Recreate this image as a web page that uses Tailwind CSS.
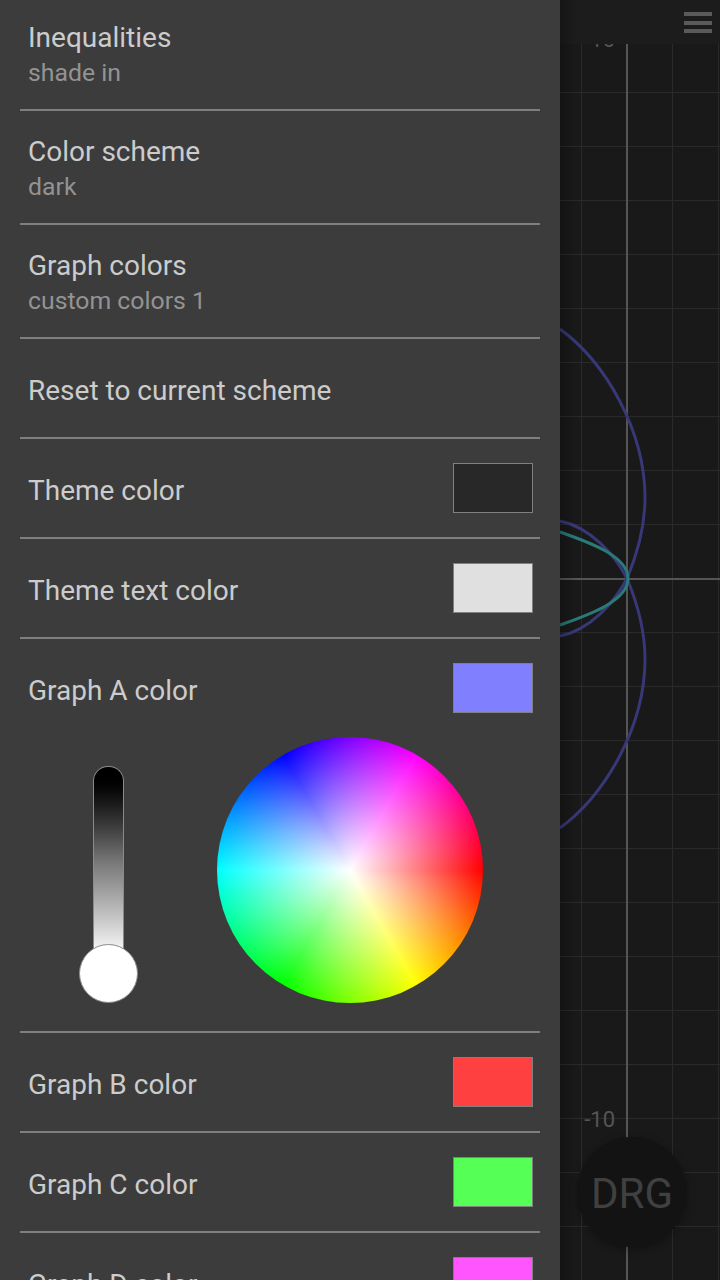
<!DOCTYPE html>
<html lang="en">
<head>
    <meta charset="UTF-8">
    <title>Settings</title>
    <script src="https://cdn.jsdelivr.net/npm/@tailwindcss/browser@4"></script>
</head>
<body class="bg-[#191919]">
    <div class="relative w-[720px] h-[1280px] overflow-hidden font-['Roboto',sans-serif] bg-[#191919]">

        <!-- graph behind the drawer -->
        <svg class="absolute left-0 top-0" width="720" height="1280" viewBox="0 0 720 1280" fill="none">
            <g stroke="#2a2a2a" stroke-width="1">
                <path d="M581.5 44V1280M672.5 44V1280M718.5 44V1280"/>
                <path d="M560 92.5H720M560 146.5H720M560 200.5H720M560 254.5H720M560 308.5H720M560 362.5H720M560 416.5H720M560 470.5H720M560 524.5H720"/>
                <path d="M560 632.5H720M560 686.5H720M560 740.5H720M560 794.5H720M560 848.5H720M560 902.5H720M560 956.5H720M560 1010.5H720M560 1064.5H720M560 1118.5H720M560 1172.5H720M560 1226.5H720"/>
            </g>
            <path d="M627 44V1280M560 579H720" stroke="#555555" stroke-width="2"/>
            <g stroke="#383878" stroke-width="3">
                <path d="M560 329C605 362 645 430 645 498C645 530 636 557 627 578.5C636 600 645 627 645 659C645 727 605 795 560 828"/>
                <path d="M560 521C590 527 615 555 627 578.5C615 602 590 630 560 636"/>
            </g>
            <path d="M560 532C585 541 628 555 628 578.5C628 602 585 616 560 625" stroke="#2a7a78" stroke-width="3"/>
        </svg>
        <div class="absolute right-[105px] top-[20px] text-[22px] leading-[40px] text-[#555555]">10</div>
        <div class="absolute right-[105px] top-[1100px] text-[22px] leading-[40px] text-[#555555]">-10</div>

        <!-- top bar -->
        <div class="absolute left-0 top-0 w-[720px] h-[44px] bg-[#1c1c1c]">
            <div class="absolute left-[684px] top-[12px] w-[28px] flex flex-col gap-[4.5px]">
                <div class="h-[4px] bg-[#5a5a5a]"></div>
                <div class="h-[4px] bg-[#5a5a5a]"></div>
                <div class="h-[4px] bg-[#5a5a5a]"></div>
            </div>
        </div>

        <!-- drawer shadow -->
        <div class="absolute left-[560px] top-0 w-[16px] h-[1280px] bg-gradient-to-r from-black/25 to-transparent"></div>

        <!-- DRG button -->
        <div class="absolute left-[577px] top-[1137px] w-[110px] h-[110px] pt-[3px] rounded-full bg-[#131313] shadow-[0_3px_8px_rgba(0,0,0,0.3)] flex items-center justify-center text-[42px] text-[#404040]">DRG</div>

        <!-- settings drawer -->
        <div class="absolute left-0 top-0 w-[560px] h-[1280px] overflow-hidden bg-[#3c3c3c]">
            <div class="mx-[20px] mt-[-3px]">
                <div class="h-[114px] px-[8px] pt-[23px] border-b-2 border-[#7f7f7f]">
                    <div class="text-[28px] leading-[36px] text-[#cccccc]">Inequalities</div>
                    <div class="text-[24.8px] leading-[34px] text-[#939393]">shade in</div>
                </div>
                <div class="h-[114px] px-[8px] pt-[23px] border-b-2 border-[#7f7f7f]">
                    <div class="text-[28px] leading-[36px] text-[#cccccc]">Color scheme</div>
                    <div class="text-[24.8px] leading-[34px] text-[#939393]">dark</div>
                </div>
                <div class="h-[114px] px-[8px] pt-[23px] border-b-2 border-[#7f7f7f]">
                    <div class="text-[28px] leading-[36px] text-[#cccccc]">Graph colors</div>
                    <div class="text-[24.8px] leading-[34px] text-[#939393]">custom colors 1</div>
                </div>
                <div class="h-[100px] pl-[8px] pr-[7px] flex items-center border-b-2 border-[#7f7f7f] text-[28px] text-[#cccccc]">
                    <span class="pt-[6px]">Reset to current scheme</span>
                </div>
                <div class="h-[100px] pl-[8px] pr-[7px] flex items-center justify-between border-b-2 border-[#7f7f7f] text-[28px] text-[#cccccc]">
                    <span class="pt-[6px]">Theme color</span>
                    <div class="w-[80px] h-[50px] border border-[#808080] bg-[#282828]"></div>
                </div>
                <div class="h-[100px] pl-[8px] pr-[7px] flex items-center justify-between border-b-2 border-[#7f7f7f] text-[28px] text-[#cccccc]">
                    <span class="pt-[6px]">Theme text color</span>
                    <div class="w-[80px] h-[50px] border border-[#808080] bg-[#e0e0e0]"></div>
                </div>
                <div class="h-[394px] border-b-2 border-[#7f7f7f]">
                    <div class="h-[98px] pl-[8px] pr-[7px] flex items-center justify-between text-[28px] text-[#cccccc]">
                        <span class="pt-[6px]">Graph A color</span>
                        <div class="w-[80px] h-[50px] border border-[#808080] bg-[#8080ff]"></div>
                    </div>
                    <div class="relative h-[294px]">
                        <!-- brightness slider -->
                        <div class="absolute left-[73px] top-[29px] w-[31px] h-[190px] rounded-t-[15px] border-x border-t border-[#8a8a8a] bg-gradient-to-b from-black via-[#777777] to-white"></div>
                        <div class="absolute left-[59px] top-[207px] w-[59px] h-[59px] rounded-full bg-white border border-[#8a8a8a]"></div>
                        <!-- color wheel -->
                        <div class="absolute left-[197px] top-[0px] w-[266px] h-[266px] rounded-full bg-[radial-gradient(closest-side,#ffffff,rgba(255,255,255,0)),conic-gradient(from_90deg,#ff0000,#ffff00,#00ff00,#00ffff,#0000ff,#ff00ff,#ff0000)]"></div>
                    </div>
                </div>
                <div class="h-[100px] pl-[8px] pr-[7px] flex items-center justify-between border-b-2 border-[#7f7f7f] text-[28px] text-[#cccccc]">
                    <span class="pt-[6px]">Graph B color</span>
                    <div class="w-[80px] h-[50px] border border-[#808080] bg-[#ff4040]"></div>
                </div>
                <div class="h-[100px] pl-[8px] pr-[7px] flex items-center justify-between border-b-2 border-[#7f7f7f] text-[28px] text-[#cccccc]">
                    <span class="pt-[6px]">Graph C color</span>
                    <div class="w-[80px] h-[50px] border border-[#808080] bg-[#55ff55]"></div>
                </div>
                <div class="h-[100px] pl-[8px] pr-[7px] flex items-center justify-between border-b-2 border-[#7f7f7f] text-[28px] text-[#cccccc]">
                    <span class="pt-[6px]">Graph D color</span>
                    <div class="w-[80px] h-[50px] border border-[#808080] bg-[#ff55ff]"></div>
                </div>
            </div>
        </div>
    </div>
</body>
</html>
